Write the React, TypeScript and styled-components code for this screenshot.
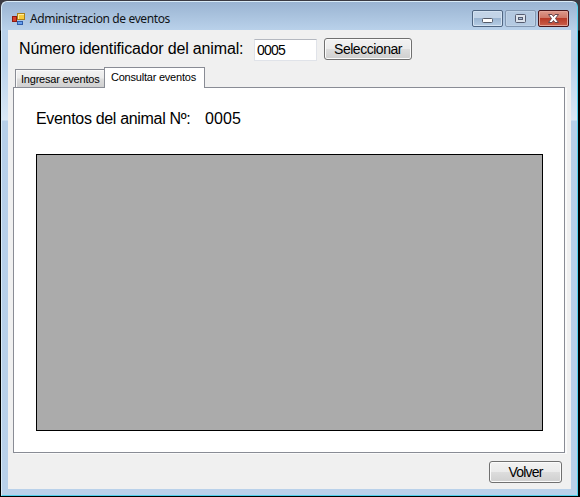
import React from 'react';
import styled, { createGlobalStyle } from 'styled-components';

const Global = createGlobalStyle`
  * { box-sizing: border-box; }
  body { margin: 0; background: #000; overflow: hidden; }
`;

const Desktop = styled.div`
  width: 580px;
  height: 497px;
  padding: 1px;
  background: linear-gradient(#3a3a42 0, #3a3a42 30px, #000 31px);
`;

const Frame = styled.div`
  width: 577px;
  height: 495px;
  border-radius: 6px 6px 0 0;
  border: 1px solid #d9ebf7;
  border-right-color: #54d3ee;
  border-bottom-color: #4fd0ec;
  padding: 0 6px 6px;
  display: flex;
  flex-direction: column;
  background:
    linear-gradient(#9ab4d2, #b9d1ea) top / 100% 28px no-repeat,
    linear-gradient(#b9d1ea 28px, #b9d1ea 60px, #d9e8f6 118px, #b6cfe9 119px, #b9d1ea);
`;

const TitleBar = styled.header`
  height: 28px;
  flex: none;
  display: flex;
  align-items: flex-start;
  padding-left: 4px;
`;

const TitleText = styled.h1`
  margin: 9px 0 0 5px;
  flex: 1;
  font: 400 12px/16px "Noto Sans", sans-serif;
  letter-spacing: -0.38px;
  color: #101418;
  white-space: nowrap;
`;

const AppIcon = styled.svg`
  margin-top: 10px;
  width: 13px;
  height: 14px;
`;

const Controls = styled.div`
  display: flex;
  gap: 2px;
  margin: 8px 2px 0 0;
`;

const Control = styled.button<{ $kind: 'normal' | 'dim' | 'close' }>`
  width: 31px;
  height: 17px;
  padding: 0;
  display: grid;
  place-items: center;
  border-radius: 2px;
  border: 1px solid ${p => ({ normal: '#4f6581', dim: '#8297b1', close: '#48151a' }[p.$kind])};
  box-shadow: inset 0 0 0 1px ${p => ({ normal: '#d3e2f1', dim: '#bfd2e6', close: '#e3a397' }[p.$kind])};
  background: ${p => ({
    normal: 'linear-gradient(#c3d4e7 0 45%, #9bb5d1 50%, #b6cde5)',
    dim: 'linear-gradient(#b3c8df, #b4cae2)',
    close: 'linear-gradient(#dd998b 0, #cf7767 45%, #b83a27 50%, #ca604c)',
  }[p.$kind])};
  svg { display: block; }
`;

const Client = styled.main`
  flex: 1;
  width: 563px;
  background: #f0f0f0;
  font-family: "Liberation Sans", Arial, sans-serif;
  color: #000;
  display: flex;
  flex-direction: column;
`;

const SearchRow = styled.div`
  height: 37px;
  flex: none;
  display: flex;
  align-items: flex-start;
  padding: 8px 0 0 11px;
`;

const Label = styled.span<{ $width: number; $spacing: number }>`
  width: ${p => p.$width}px;
  margin-top: 1px;
  font-size: 16px;
  line-height: 20px;
  letter-spacing: ${p => p.$spacing}px;
  white-space: nowrap;
`;

const Field = styled.input`
  width: 63px;
  height: 22px;
  margin-top: 1px;
  padding: 0 2px;
  border: 1px solid #e0e3e9;
  border-top-color: #b4b8c0;
  background: #fff;
  color: #000;
  font: 14px "Liberation Sans", Arial, sans-serif;
  letter-spacing: -0.75px;
  outline: 0;
`;

const Button = styled.button<{ $width: number; $spacing: number }>`
  width: ${p => p.$width}px;
  height: 22px;
  padding: 0;
  border: 1px solid #707070;
  border-radius: 3px;
  box-shadow: inset 0 0 0 1px #fbfbfb;
  background: linear-gradient(#f2f2f2, #ebebeb 49%, #dddddd 51%, #cfcfcf);
  color: #000;
  font: 14px/20px "Liberation Sans", Arial, sans-serif;
  letter-spacing: ${p => p.$spacing}px;
`;

const SelectButton = styled(Button)`
  margin-left: 7px;
`;

const Tabs = styled.div`
  height: 21px;
  flex: none;
  display: flex;
  align-items: flex-end;
  padding-left: 7px;
`;

const Tab = styled.div<{ $active?: boolean }>`
  width: ${p => (p.$active ? 101 : 90)}px;
  height: ${p => (p.$active ? 21 : 18)}px;
  margin: ${p => (p.$active ? '0 0 0 -1px' : '0 0 1px')};
  padding-left: ${p => (p.$active ? 6 : 5)}px;
  border: 1px solid #898c95;
  border-bottom: 0;
  background: ${p => (p.$active ? '#fff' : 'linear-gradient(#f2f2f2, #ebebeb 49%, #dddddd 51%, #d0d0d0)')};
  box-shadow: ${p => (p.$active ? 'none' : 'inset 1px 1px #fafafa')};
  position: relative;
  z-index: ${p => (p.$active ? 1 : 0)};
  font-size: 11px;
  line-height: 19px;
  letter-spacing: -0.22px;
  white-space: nowrap;
`;

const Panel = styled.section`
  width: 552px;
  height: 366px;
  flex: none;
  margin: -1px 0 0 5px;
  padding: 20px 0 0 22px;
  border: 1px solid #898c95;
  background: #fff;
  box-shadow: 2px 1px 0 #fafafa;
`;

const Heading = styled.div`
  display: flex;
  height: 46px;
`;

const DataGrid = styled.div`
  width: 507px;
  height: 277px;
  background: #ababab;
  border: 1px solid #000;
`;

const Footer = styled.footer`
  display: flex;
  justify-content: flex-end;
  padding: 8px 9px 0 0;
`;

export default function App() {
  return (
    <>
      <Global />
      <Desktop>
        <Frame>
          <TitleBar>
            <AppIcon viewBox="0 0 13 14">
              <rect x="0.5" y="4.5" width="4" height="5" fill="#d6402c" stroke="#8e1b12" />
              <rect x="5.5" y="1.5" width="7" height="6" fill="#f7cb3c" stroke="#a9801a" />
              <path d="M6.5 7V2.5H12" fill="none" stroke="#ffee9c" />
              <rect x="5.5" y="9.5" width="5" height="3" fill="#66a0ee" stroke="#2f5dab" />
            </AppIcon>
            <TitleText>Administracion de eventos</TitleText>
            <Controls>
              <Control $kind="normal" aria-label="Minimizar">
                <svg width="29" height="15">
                  <rect x="9.5" y="7.5" width="10" height="4" rx="1" fill="#fff" stroke="#555b68" />
                </svg>
              </Control>
              <Control $kind="dim" aria-label="Maximizar">
                <svg width="29" height="15">
                  <rect x="9.5" y="3.5" width="10" height="8" rx="1" fill="#dce3ec" stroke="#555c70" />
                  <rect x="12.5" y="6.5" width="4" height="2" fill="#a9bfd7" stroke="#555c70" />
                </svg>
              </Control>
              <Control $kind="close" aria-label="Cerrar">
                <svg width="29" height="15">
                  <path
                    d="M9.5 3.5h3.5l1.5 2 1.5-2h3.5l-3 4 3 4H16l-1.5-2-1.5 2H9.5l3-4z"
                    fill="#fff"
                    stroke="#64454c"
                    strokeLinejoin="round"
                  />
                </svg>
              </Control>
            </Controls>
          </TitleBar>
          <Client>
            <SearchRow>
              <Label $width={235} $spacing={-0.16}>Número identificador del animal:</Label>
              <Field defaultValue="0005" aria-label="Número identificador" />
              <SelectButton $width={88} $spacing={-0.48}>Seleccionar</SelectButton>
            </SearchRow>
            <Tabs>
              <Tab>Ingresar eventos</Tab>
              <Tab $active>Consultar eventos</Tab>
            </Tabs>
            <Panel>
              <Heading>
                <Label $width={169} $spacing={-0.32}>Eventos del animal Nº:</Label>
                <Label $width={60} $spacing={0.1}>0005</Label>
              </Heading>
              <DataGrid />
            </Panel>
            <Footer>
              <Button $width={73} $spacing={-0.8}>Volver</Button>
            </Footer>
          </Client>
        </Frame>
      </Desktop>
    </>
  );
}
